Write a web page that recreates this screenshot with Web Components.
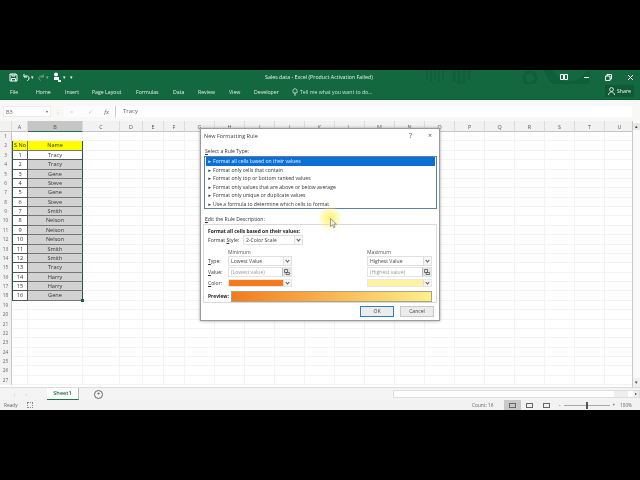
<!DOCTYPE html>
<html>
<head>
<meta charset="utf-8">
<title>Sales data - Excel</title>
<style>
  html, body { margin: 0; background: #000; }
  body { width: 640px; height: 480px; overflow: hidden; font-family: "Open Sans", "Liberation Sans", sans-serif; }
</style>
</head>
<body>
<xl-window>
  <xl-titlebar title="Sales data - Excel (Product Activation Failed)"></xl-titlebar>
  <xl-ribbon-tabs></xl-ribbon-tabs>
  <xl-formula-bar ref="B3" value="Tracy"></xl-formula-bar>
  <xl-sheet></xl-sheet>
  <xl-sheet-tabs></xl-sheet-tabs>
  <xl-status-bar></xl-status-bar>
  <xl-rule-dialog></xl-rule-dialog>
</xl-window>

<script>
// small helper, every component just sets its shadow html once
class Base extends HTMLElement {
  constructor() {
    super();
    this.attachShadow({ mode: 'open' });
  }
  connectedCallback() {
    this.shadowRoot.innerHTML = this.render();
  }
}

class XlWindow extends Base {
  render() {
    // the reference is a soft video frame, hence the slight blur
    return `<style>
      :host { display: block; position: relative; width: 640px; height: 480px; background: #000; padding-top: 70px; box-sizing: border-box; filter: blur(.3px); }
    </style><slot></slot>`;
  }
}

class XlTitlebar extends Base {
  render() {
    const t = this.getAttribute('title');
    return `<style>
      :host { display: flex; align-items: center; position: relative; height: 14px; background: #13683f; color: #e6f0ea; font-size: 5.3px; overflow: hidden; }
      .qat { display: flex; align-items: center; gap: 4px; padding-left: 9px; width: 200px; }
      .title { position: absolute; left: 265px; top: 3px; white-space: nowrap; }
      .art { position: absolute; left: 420px; top: 0; }
      .win { position: absolute; right: -1px; top: 0; height: 14px; display: flex; align-items: center; }
      .win span { width: 22px; display: flex; justify-content: center; }
      svg { display: block; }
    </style>
    <svg class="art" width="170" height="16" viewBox="0 0 170 16" fill="none" stroke="#0f5f39">
      <path d="M7 0v10M11 0v12M15 0v9M19 0v13M23 0v10" stroke-width="1.5"/>
      <path d="M34 0v12M39 0v14M44 0v13M49 0v10" stroke-width="3"/>
      <circle cx="110" cy="8" r="6" stroke-width="3"/>
      <circle cx="150" cy="-6" r="22" stroke-width="9"/>
    </svg>
    <div class="qat">
      <svg width="9" height="9" viewBox="0 0 9 9" fill="none" stroke="#fff"><path d="M1 1h6l1 1v6H1z M3 1v2h3V1 M2.500 8V5.500h4V8"/></svg>
      <svg width="8" height="8" viewBox="0 0 8 8" fill="none" stroke="#fff"><path d="M2 1v3h3M2 4c2-2 5-1 5 1s-1 2-2 3"/></svg>
      <span style="margin-left:-3px">▾</span>
      <svg width="7" height="8" viewBox="0 0 8 8" fill="none" stroke="#7fae96"><path d="M6 1v3H3M6 4C4 2 1 3 1 5s1 2 2 3"/></svg>
      <span style="margin-left:-3px;color:#7fae96">▾</span>
      <svg width="9" height="10" viewBox="0 0 9 10" fill="#fff"><circle cx="3" cy="2.500" r="2"/><path d="M1 5h5v3H1z"/><path d="M5 8h3v2H5z"/></svg>
      <span style="margin-left:-3px">▾</span>
      <span>▾</span>
    </div>
    <div class="title">${t}</div>
    <div class="win">
      <span><svg width="8" height="6" viewBox="0 0 8 6" fill="none" stroke="#fff"><path d="M.5.500h3v5h-3zM4.500.500h3v5h-3z"/></svg></span>
      <span><svg width="7" height="3" viewBox="0 0 7 3" stroke="#fff"><path d="M1 1.500h5"/></svg></span>
      <span><svg width="7" height="7" viewBox="0 0 7 7" fill="none" stroke="#fff"><path d="M.5 2h4.500v4.500H.5zM2 2V.5h4.500V5H5"/></svg></span>
      <span><svg width="7" height="7" viewBox="0 0 7 7" stroke="#fff"><path d="M1 1l5 5M6 1l-5 5"/></svg></span>
    </div>`;
  }
}

class XlRibbonTabs extends Base {
  render() {
    const tabs = [['File', 10], ['Home', 36], ['Insert', 65], ['Page Layout', 92], ['Formulas', 136], ['Data', 173], ['Review', 198], ['View', 229], ['Developer', 254]];
    return `<style>
      :host { display: block; position: relative; height: 16px; background: #13683f; color: #e6f0ea; font-size: 5.2px; border-bottom: 1px solid #0f5c37; box-sizing: border-box; }
      .row { display: flex; align-items: center; height: 15px; padding-left: 10px; gap: 0; white-space: nowrap; }
      .row span { display: inline-block; }
      .tell { display: flex; align-items: center; gap: 2px; color: #cfe2d7; }
      .share { position: absolute; right: 6px; top: 1px; height: 12px; width: 29px; background: #0d5a35; display: flex; align-items: center; justify-content: center; gap: 2px; color: #fff; }
    </style>
    <div class="row">
      ${tabs.map((t, i) => `<span style="width:${i < tabs.length - 1 ? tabs[i + 1][1] - t[1] : 38}px">${t[0]}</span>`).join('')}
      <div class="tell">
        <svg width="6" height="8" viewBox="0 0 6 8" fill="none" stroke="#fff" stroke-width=".7"><path d="M1.500 5C.5 4 .5 1 3 .7 5.500 1 5.500 4 4.500 5zM2 6h2M2.500 7.300h1"/></svg>
        <span>Tell me what you want to do...</span>
      </div>
    </div>
    <div class="share">
      <svg width="7" height="8" viewBox="0 0 7 8" fill="none" stroke="#fff" stroke-width=".8"><circle cx="3.500" cy="2.500" r="1.900"/><path d="M.5 8c0-4 6-4 6 0"/></svg>
      <span>Share</span>
    </div>`;
  }
}

class XlFormulaBar extends Base {
  render() {
    return `<style>
      :host { display: flex; align-items: center; height: 21px; background: #f8f8f7; color: #666; font-size: 5.6px; padding: 2px 0 0 3px; box-sizing: border-box; }
      .name { width: 48px; height: 11px; background: #fff; border: 1px solid #ececec; display: flex; justify-content: space-between; align-items: center; padding: 0 2px 0 2px; box-sizing: border-box; }
      .dots { width: 13px; text-align: center; color: #ccc; }
      .btns { display: flex; align-items: center; width: 52px; height: 11px; background: #fcfcfc; border-right: 1px solid #ccc; box-sizing: border-box; color: #c4c4c4; }
      .btns span { position: relative; }
      .fx { font-family: "Liberation Serif", serif; font-style: italic; color: #666; font-size: 6.500px; }
      .val { flex: 1; height: 11px; background: #fff; padding-left: 7px; line-height: 11px; margin-right: 8px; font-size: 6px; color: #666; }
    </style>
    <div class="name"><span>${this.getAttribute('ref')}</span><span style="font-size:4px">▾</span></div>
    <div class="dots">⋮</div>
    <div class="btns"><span style="margin-left:6px">×</span><span style="margin-left:15px">✓</span><span class="fx" style="margin-left:11px">fx</span></div>
    <div class="val">${this.getAttribute('value')}</div>`;
  }
}

class XlSheet extends Base {
  render() {
    const cols = [['A', 16], ['B', 55], ['C', 37], ['D', 23], ['E', 21], ['F', 21]];
    ['G', 'H', 'I', 'J', 'K', 'L', 'M', 'N', 'O', 'P', 'Q', 'R', 'S', 'T', 'U'].forEach(c => cols.push([c, 30]));
    const names = ['Tracy', 'Tracy', 'Gene', 'Steve', 'Gene', 'Steve', 'Smith', 'Nelson', 'Nelson', 'Nelson', 'Smith', 'Smith', 'Tracy', 'Harry', 'Harry', 'Gene'];
    const tpl = cols.map(c => c[1] + 'px').join(' ');
    let head = `<div class="hd corner"></div>` + cols.map(c => `<div class="hd ${c[0] === 'B' ? 'sel' : ''}">${c[0]}</div>`).join('');
    let body = '';
    for (let r = 1; r <= 27; r++) {
      body += `<div class="rn">${r}</div>`;
      cols.forEach((c, i) => {
        let cls = 'c';
        let txt = '';
        if (r === 2 && i < 2) { cls += ' y'; txt = i ? 'Name' : 'S No'; }
        if (r > 2 && r <= 18 && i === 0) { cls += ' w'; txt = r - 2; }
        if (r > 2 && r <= 18 && i === 1) { cls += r === 3 ? ' w' : ' g'; txt = names[r - 3]; }
        if (r >= 2 && r <= 18 && i === 0) cls += ' bl';
        if (r >= 2 && r <= 18 && i === 1) cls += ' br';
        body += `<div class="${cls}">${txt}</div>`;
      });
    }
    return `<style>
      :host { display: block; position: relative; height: 266px; background: #fff; overflow: hidden; }
      .g0 { display: grid; grid-template-columns: 12px ${tpl}; grid-template-rows: 11px repeat(27, 9.375px); width: 660px; color: #333; font-size: 5.6px; }
      .hd { background: #f2f2f2; border-right: 1px solid #dcdcdc; text-align: center; line-height: 12px; color: #555; font-size: 5.4px; box-sizing: border-box; border-bottom: 1px solid #c4c4c4; }
      .hd.sel { background: #c6c6c6; border-bottom: 1px solid #217346; }
      .rn { background: #f2f2f2; border-right: 1px solid #c8c8c8; text-align: center; line-height: 9.375px; color: #666; font-size: 4.8px; box-sizing: border-box; }
      .c { border-right: 1px solid #f3f3f3; border-bottom: 1px solid #f3f3f3; box-sizing: border-box; text-align: center; line-height: 9.400px; overflow: hidden; }
      .y { background: #ffff00; border-color: #777; }
      .w { background: #fff; border-color: #555; }
      .g { background: #d2d2d2; border-color: #777; }
      .bl { border-left: 1px solid #1d5c44; }
      .br { border-right: 1px solid #1d5c44; }
      .handle { position: absolute; left: 81px; top: 178px; width: 3px; height: 3px; background: #1d5c44; }
      .vs { position: absolute; right: 0; top: 0; bottom: 0; width: 8px; background: #fafafa; border-left: 1px solid #c8c8c8; box-sizing: border-box; }
      .vs b { position: absolute; left: 0; right: 0; top: 2px; height: 7px; background: #e8e8e8; font: 5px "Liberation Sans", sans-serif; text-align: center; line-height: 7px; color: #444; }
      .vs u { position: absolute; left: 0; right: 0; bottom: 0; height: 9px; text-decoration: none; font: 5px "Liberation Sans", sans-serif; text-align: center; line-height: 9px; color: #444; background: #f0f0f0; }
    </style>
    <div class="g0">${head}${body}</div>
    <div class="handle"></div>
    <div class="vs"><b>▴</b><u>▾</u></div>`;
  }
}

class XlSheetTabs extends Base {
  render() {
    return `<style>
      :host { display: flex; align-items: stretch; position: relative; height: 13px; background: #f4f4f4; border-top: 1px solid #ddd; font-size: 5.6px; color: #333; box-sizing: border-box; }
      .nav { width: 47px; display: flex; gap: 10px; justify-content: center; color: #bbb; align-items: center; padding-right: 6px; box-sizing: border-box; }
      .tab { width: 31px; background: #fff; color: #1f6b43; font-weight: 600; text-align: center; border-bottom: 1px solid #217346; border-right: 1px solid #bbb; line-height: 11px; }
      .add { margin-left: 15px; align-self: center; width: 7px; height: 7px; border: 1px solid #666; border-radius: 50%; text-align: center; line-height: 6px; }
      .hs { position: absolute; left: 393px; right: 0; top: 2px; height: 8px; background: #fff; border: 1px solid #ddd; box-sizing: border-box; display: flex; justify-content: flex-end; }
      .hs b { display: block; width: 6px; background: #eee; text-align: center; font-size: 4px; line-height: 6px; font-weight: 400; }
      .hs em { display: block; width: 14px; background: #eee; margin-right: 5px; }
    </style>
    <div class="nav"><span>‹</span><span>›</span></div>
    <div class="tab">Sheet1</div>
    <div class="add">+</div>
    <div class="hs"><em></em><b>▸</b></div>`;
  }
}

class XlStatusBar extends Base {
  render() {
    return `<style>
      :host { display: flex; align-items: center; position: relative; height: 10px; background: #f2f2f2; color: #666; font-size: 4.800px; padding-left: 4px; box-sizing: border-box; }
      .macro { margin-left: 9px; width: 6px; height: 6px; border: 1px dotted #888; box-sizing: border-box; }
      .right { position: absolute; left: 472px; top: 0; height: 10px; display: flex; align-items: center; white-space: nowrap; }
      .count { width: 32px; }
      .view { width: 17px; height: 10px; display: flex; justify-content: center; align-items: center; }
      .view.on { background: #c8c8c8; }
      .view i { display: block; width: 7px; height: 5px; border: 1px solid #666; box-sizing: border-box; }
      .zoom { display: flex; align-items: center; margin-left: 4px; }
      .track { position: relative; width: 46px; height: 1px; background: #aaa; margin: 0 3px; }
      .track b { position: absolute; left: 22px; top: -3px; width: 2px; height: 7px; background: #555; }
    </style>
    <span>Ready</span><div class="macro"></div>
    <div class="right">
      <span class="count">Count: 16</span>
      <div class="view on"><i></i></div><div class="view"><i></i></div><div class="view"><i></i></div>
      <div class="zoom"><span>-</span><div class="track"><b></b></div><span>+</span></div>
      <span style="margin-left:5px;font-size:4.500px">100%</span>
    </div>`;
  }
}

class XlRuleDialog extends Base {
  render() {
    const rules = ['Format all cells based on their values', 'Format only cells that contain', 'Format only top or bottom ranked values', 'Format only values that are above or below average', 'Format only unique or duplicate values', 'Use a formula to determine which cells to format'];
    const rangeBtn = `<b><svg width="6" height="6" viewBox="0 0 6 6" fill="none" stroke="#555" stroke-width=".8"><path d="M.5.500h3v3h-3zM2 3.500h3.500v2H2z"/></svg></b>`;
    return `<style>
      :host { display: block; position: absolute; left: 200px; top: 128px; width: 240px; height: 193px; background: #fff; border: 1px solid #9a9a9a; box-shadow: 0 0 3px #999; box-sizing: border-box; color: #333; font-size: 5.100px; }
      .head { display: flex; justify-content: space-between; padding: 3px 7px 0 3px; height: 13px; font-size: 5.500px; color: #444; }
      .body { padding: 2.500px 2px 0 3px; }
      .body > div:first-child { line-height: 7px; padding-left: 1px; }
      u { text-underline-offset: 1px; }
      .list { margin-top: 1.500px; border: 1px solid #5b7fa6; height: 53px; padding: 0 1px; box-sizing: border-box; }
      .list div { display: flex; height: 8.500px; line-height: 8.500px; padding-left: 1.500px; white-space: nowrap; }
      .list i { font-style: normal; font-size: 4.500px; width: 5.500px; flex: none; }
      .list div.on { background: #0b6fd6; color: #e9f3ff; }
      .desc { margin-top: 6.500px; line-height: 7px; padding-left: 1px; }
      .box { border: 1px solid #d9d9d9; margin: 1.500px 0 0 -1px; height: 79px; padding: 2.500px 4px 0 4px; box-sizing: border-box; display: flex; flex-direction: column; }
      .bold { font-weight: 700; font-size: 4.900px; color: #222; line-height: 7px; white-space: nowrap; }
      .style { display: flex; align-items: center; margin-top: .5px; }
      .style > span { width: 35px; flex: none; white-space: nowrap; }
      .sel { position: relative; height: 10px; background: #fff; border: 1px solid #e0e0e0; box-sizing: border-box; line-height: 8px; padding-left: 2px; color: #444; }
      .sel::after { content: ""; position: absolute; right: 0; top: 0; bottom: 0; width: 7px; background: #f6f6f6 ; border-left: 1px solid #ddd; }
      .sel::before { content: ""; position: absolute; z-index: 1; right: 2px; top: 2px; width: 2px; height: 2px; border-right: 1px solid #555; border-bottom: 1px solid #555; transform: rotate(45deg); }
      .cols { display: flex; justify-content: space-between; margin-top: 4px; }
      .col { width: 84px; }
      .col.right { width: 65px; }
      .line { display: flex; align-items: center; height: 11px; }
      .line > span:first-child { width: 20px; flex: none; }
      .col .cap { padding-left: 20px; height: 6.500px; line-height: 6px; color: #555; }
      .col.right .cap { padding-left: 0; }
      .col.right .line > span:first-child { display: none; }
      .fill { flex: 1; }
      .ref { position: relative; flex: 1; height: 10px; border: 1px solid #e4e4e4; box-sizing: border-box; line-height: 8px; padding-left: 2px; color: #999; }
      .ref b { position: absolute; right: 0; top: 0; bottom: 0; width: 8px; background: #e4e4e4; border-left: 1px solid #bbb; display: flex; align-items: center; justify-content: center; }
      .swatch { position: relative; flex: 1; height: 8px; border: 1px solid #e8e8e8; box-sizing: border-box; }
      .swatch::after { content: ""; position: absolute; right: 0; top: 0; bottom: 0; width: 7px; background: #f6f6f6; border-left: 1px solid #ddd; }
      .swatch::before { content: ""; position: absolute; z-index: 1; right: 2px; top: 1px; width: 2px; height: 2px; border-right: 1px solid #555; border-bottom: 1px solid #555; transform: rotate(45deg); }
      .preview { display: flex; align-items: center; margin-top: 2.500px; }
      .preview .bold { width: 23px; flex: none; }
      .ramp { flex: 1; height: 11px; border: 1px solid #a5a58a; box-sizing: border-box; background: linear-gradient(to right, #f47a1c, #fff08a); }
      .foot { display: flex; justify-content: flex-end; gap: 6px; padding: 3px 3px 0 0; }
      .btn { width: 34px; height: 11px; background: #ececec; border: 1px solid #c8c8c8; box-sizing: border-box; text-align: center; line-height: 9px; color: #444; }
      .btn.ok { border: 1px solid #2f7fb8; }
      .glow { position: absolute; left: 117px; top: 77px; width: 24px; height: 24px; border-radius: 50%; background: radial-gradient(circle, rgba(255,242,80,.85), rgba(255,245,120,.35) 55%, rgba(255,255,200,0) 72%); pointer-events: none; }
      .arrow { position: absolute; left: 129px; top: 89px; }
    </style>
    <div class="head"><span>New Formatting Rule</span><span style="display:flex;gap:16px;font-size:7px;line-height:7px;color:#555"><span>?</span><span>×</span></span></div>
    <div class="body">
      <div><u>S</u>elect a Rule Type:</div>
      <div class="list">${rules.map((r, i) => `<div class="${i ? '' : 'on'}"><i>►</i>${r}</div>`).join('')}</div>
      <div class="desc"><u>E</u>dit the Rule Description:</div>
      <div class="box">
        <div class="bold">Format all cells based on their values:</div>
        <div class="style"><span>Format <u>S</u>tyle:</span><div class="sel" style="width:60px">2-Color Scale</div></div>
        <div class="cols">
          <div class="col">
            <div class="cap">Minimum</div>
            <div class="line"><span><u>T</u>ype:</span><div class="sel fill">Lowest Value</div></div>
            <div class="line"><span><u>V</u>alue:</span><div class="ref">(Lowest value)${rangeBtn}</div></div>
            <div class="line"><span><u>C</u>olor:</span><div class="swatch"><div style="height:100%;width:54px;background:#f47a1c"></div></div></div>
          </div>
          <div class="col right">
            <div class="cap">Maximum</div>
            <div class="line"><span></span><div class="sel fill">Highest Value</div></div>
            <div class="line"><span></span><div class="ref">(Highest value)${rangeBtn}</div></div>
            <div class="line"><span></span><div class="swatch"><div style="height:100%;width:55px;background:#fff3a0"></div></div></div>
          </div>
        </div>
        <div class="preview"><span class="bold">Preview:</span><div class="ramp"></div></div>
      </div>
      <div class="foot"><div class="btn ok">OK</div><div class="btn">Cancel</div></div>
    </div>
    <div class="glow"></div>
    <svg class="arrow" width="7" height="11" viewBox="0 0 7 11" fill="#eee" stroke="#777" stroke-width=".7"><path d="M.5.500v8l2-1.800 1.200 3 1.300-.5-1.200-3h2.700z"/></svg>`;
  }
}

customElements.define('xl-window', XlWindow);
customElements.define('xl-titlebar', XlTitlebar);
customElements.define('xl-ribbon-tabs', XlRibbonTabs);
customElements.define('xl-formula-bar', XlFormulaBar);
customElements.define('xl-sheet', XlSheet);
customElements.define('xl-sheet-tabs', XlSheetTabs);
customElements.define('xl-status-bar', XlStatusBar);
customElements.define('xl-rule-dialog', XlRuleDialog);
</script>
</body>
</html>
